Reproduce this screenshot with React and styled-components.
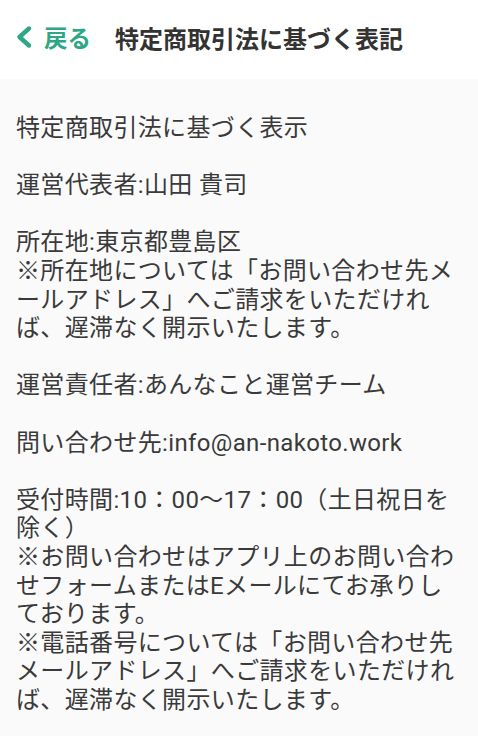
import React from 'react';
import styled, { createGlobalStyle } from 'styled-components';

const GlobalStyle = createGlobalStyle`
  html, body {
    margin: 0;
    padding: 0;
    background-color: #fafafa;
  }
  body {
    font-family: Roboto, "Noto Sans CJK JP", sans-serif;
    color: #333;
  }
`;

const Page = styled.div`
  min-height: 736px;
  background-color: #fafafa;
`;

const Header = styled.header`
  display: flex;
  align-items: center;
  height: 79px;
  padding: 0 0 5px 14px;
  box-sizing: border-box;
  background-color: #fff;
`;

const BackButton = styled.button`
  display: flex;
  align-items: center;
  gap: 10px;
  padding: 0;
  border: none;
  background: none;
  color: #2ea786;
  font-family: "Noto Sans CJK JP", sans-serif;
  font-size: 23.5px;
  font-weight: 700;
  cursor: pointer;
`;

const Title = styled.h1`
  margin: 0 0 0 24px;
  font-family: "Noto Sans CJK JP", sans-serif;
  font-size: 24px;
  font-weight: 700;
  color: #333;
`;

const Content = styled.div`
  padding: 35px 16px 20px;
  font-size: 24px;
  line-height: 28.6px;
  letter-spacing: 0.35px;
  white-space: nowrap;
  color: #3a3a3a;
`;

const Block = styled.p`
  margin: 0 0 28.6px;
`;

const Line = styled.span`
  display: block;
`;

// lines are broken where the reference breaks them
const blocks = [
  ['特定商取引法に基づく表示'],
  ['運営代表者:山田 貴司'],
  [
    '所在地:東京都豊島区',
    '※所在地については「お問い合わせ先メ',
    'ールアドレス」へご請求をいただけれ',
    'ば、遅滞なく開示いたします。',
  ],
  ['運営責任者:あんなこと運営チーム'],
  ['問い合わせ先:info@an-nakoto.work'],
  [
    '受付時間:10：00〜17：00（土日祝日を',
    '除く）',
    '※お問い合わせはアプリ上のお問い合わ',
    'せフォームまたはEメールにてお承りし',
    'ております。',
    '※電話番号については「お問い合わせ先',
    'メールアドレス」へご請求をいただけれ',
    'ば、遅滞なく開示いたします。',
  ],
];

const Chevron = () => (
  <svg width="20" height="24" viewBox="0 0 20 24">
    <path d="M15 3.5 L5.5 12 L15 20.5" fill="none" stroke="#2ea786" strokeWidth="4.4" strokeLinecap="round" strokeLinejoin="round" />
  </svg>
);

export default function App() {
  return (
    <Page>
      <GlobalStyle />
      <Header>
        <BackButton>
          <Chevron />
          戻る
        </BackButton>
        <Title>特定商取引法に基づく表記</Title>
      </Header>
      <Content>
        {blocks.map((lines, i) => (
          <Block key={i}>
            {lines.map((line) => (
              <Line key={line}>{line}</Line>
            ))}
          </Block>
        ))}
      </Content>
    </Page>
  );
}
